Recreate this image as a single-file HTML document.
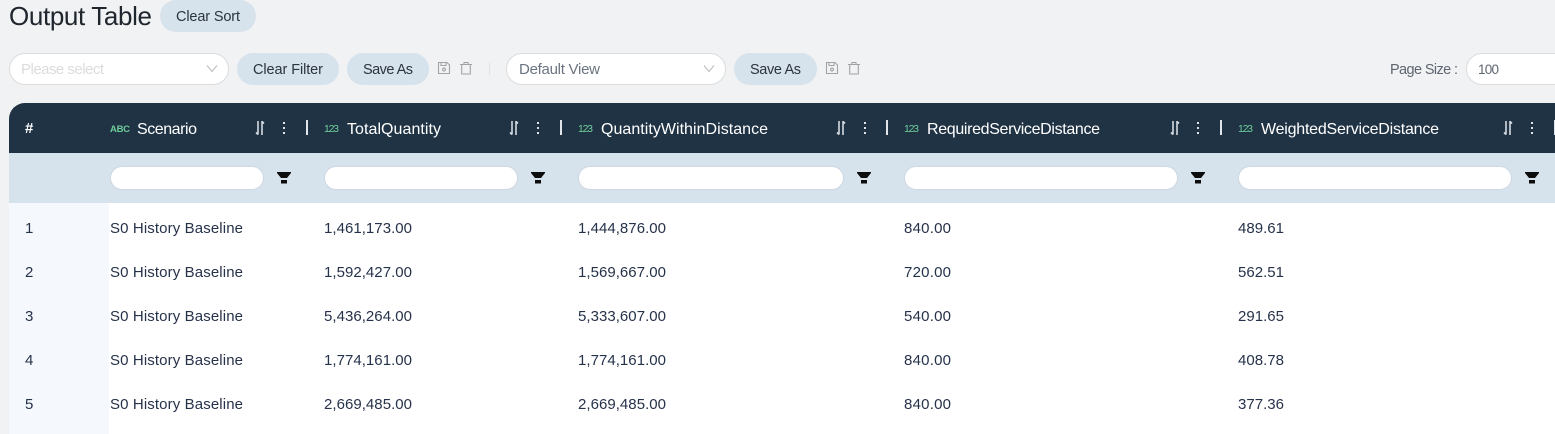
<!DOCTYPE html>
<html>
<head>
<meta charset="utf-8">
<title>Output Table</title>
<style>
html,body{margin:0;padding:0;width:1555px;height:434px;overflow:hidden;background:#f1f2f4}
svg{display:block}
text{font-family:"Liberation Sans",sans-serif;white-space:pre}
.btn{font-size:14.5px;fill:#2b3440}
.hd{font-size:16px;fill:#ffffff}
.ty{font-size:10.5px;fill:#6fce9a}
.c{font-size:15px;fill:#26324a}
.ic{fill:none;stroke:#a3a3a3;stroke-width:1.1}
.sep{fill:#e1e5ea}
.dot{fill:#dfe3e8}
.fi{fill:#fff;stroke:#cfd8e2;stroke-width:1}
</style>
</head>
<body>
<svg width="1555" height="434" viewBox="0 0 1555 434" xmlns="http://www.w3.org/2000/svg">
<defs>
<g id="sort">
<path d="M3 121v13.5M1 132.5l2 2M7 121v14M7 121.5l2 2" fill="none" stroke="#d5dae0" stroke-width="1.6"/>
</g>
<g id="menu">
<rect x="0" y="122" width="2" height="2" class="dot"/>
<rect x="0" y="127" width="2" height="2" class="dot"/>
<rect x="0" y="132" width="2" height="2" class="dot"/>
</g>
<g id="fun">
<path d="M0 172h14v1l-4 5h-6l-4-5z" fill="#0d0d0d"/>
<rect x="4" y="180" width="6" height="3.5" fill="#0d0d0d"/>
</g>
<g id="save">
<path class="ic" d="M.5 .5h8.5l2.5 2.5v8.5h-11z"/>
<path class="ic" d="M3 .5v3h5v-3"/>
<circle class="ic" cx="6" cy="7.5" r="1.4"/>
</g>
<g id="trash">
<path class="ic" d="M0 2.5h12M4 2.5v-2h4v2M1.7 2.5v9.5h8.6v-9.5"/>
</g>
</defs>

<rect width="1555" height="434" fill="#f1f2f4"/>

<text x="9" y="25" fill="#20262e" textLength="143" lengthAdjust="spacing" style="font-size:26px">Output Table</text>
<rect x="160" y="0" width="96" height="32" rx="16" fill="#d6e2ec"/>
<text class="btn" x="176" y="21" textLength="64">Clear Sort</text>

<rect x="9.5" y="53.5" width="219" height="31" rx="15.5" fill="#fff" stroke="#dcdcdc"/>
<text x="21" y="74" style="font-size:15px;fill:#dcdcdc" textLength="83">Please select</text>
<path d="M207 65.5l5 6 5-6" fill="none" stroke="#bdbdbd" stroke-width="1.1"/>
<rect x="237" y="53" width="102" height="32" rx="16" fill="#d6e2ec"/>
<text class="btn" x="253" y="74" textLength="70">Clear Filter</text>
<rect x="347" y="53" width="82" height="32" rx="16" fill="#d6e2ec"/>
<text class="btn" x="363" y="74" textLength="50">Save As</text>
<use href="#save" x="438" y="62"/>
<use href="#trash" x="460" y="62"/>
<rect x="489" y="63" width="1" height="12" fill="#e0e1e3"/>

<rect x="506.5" y="53.5" width="219" height="31" rx="15.5" fill="#fff" stroke="#dcdcdc"/>
<text x="519" y="74" style="font-size:15px;fill:#6b7480" textLength="81">Default View</text>
<path d="M704 65.5l5 6 5-6" fill="none" stroke="#bdbdbd" stroke-width="1.1"/>
<rect x="734" y="53" width="83" height="32" rx="16" fill="#d6e2ec"/>
<text class="btn" x="750" y="74" textLength="51">Save As</text>
<use href="#save" x="826" y="62"/>
<use href="#trash" x="848" y="62"/>

<text x="1390" y="74" style="font-size:14.5px;fill:#5f6670" textLength="68">Page Size :</text>
<rect x="1466.5" y="53.5" width="110" height="31" rx="15.5" fill="#fff" stroke="#dcdcdc"/>
<text x="1478" y="74" style="font-size:13.5px;fill:#5f6670" textLength="21">100</text>

<path d="M9 153V119a16 16 0 0 1 16-16H1555V153z" fill="#203345"/>
<rect x="9" y="153" width="1546" height="50" fill="#d6e2ec"/>
<rect x="9" y="203" width="1546" height="231" fill="#fff"/>
<rect x="9" y="203" width="100" height="231" fill="#f5f9fd"/>

<text x="25" y="133" style="font-size:15px;font-weight:bold;fill:#fff" textLength="10">#</text>

<text class="ty" x="110" y="132" textLength="20" style="font-size:9.5px;font-weight:bold">ABC</text>
<text class="hd" x="137" y="134" textLength="60">Scenario</text>
<use href="#sort" x="255"/><use href="#menu" x="283"/><rect class="sep" x="306" y="120" width="2" height="15"/>

<text class="ty" x="324" y="132" textLength="15">123</text>
<text class="hd" x="347" y="134" textLength="94">TotalQuantity</text>
<use href="#sort" x="509"/><use href="#menu" x="537"/><rect class="sep" x="560" y="120" width="2" height="15"/>

<text class="ty" x="578" y="132" textLength="15">123</text>
<text class="hd" x="601" y="134" textLength="167">QuantityWithinDistance</text>
<use href="#sort" x="836"/><use href="#menu" x="864"/><rect class="sep" x="886" y="120" width="2" height="15"/>

<text class="ty" x="904" y="132" textLength="15">123</text>
<text class="hd" x="927" y="134" textLength="173">RequiredServiceDistance</text>
<use href="#sort" x="1170"/><use href="#menu" x="1197"/><rect class="sep" x="1220" y="120" width="2" height="15"/>

<text class="ty" x="1238" y="132" textLength="15">123</text>
<text class="hd" x="1261" y="134" textLength="178">WeightedServiceDistance</text>
<use href="#sort" x="1503"/><use href="#menu" x="1531"/><rect class="sep" x="1554" y="120" width="1" height="15"/>

<rect class="fi" x="110.5" y="166.5" width="153" height="23" rx="11.5"/>
<use href="#fun" x="277"/>
<rect class="fi" x="324.5" y="166.5" width="193" height="23" rx="11.5"/>
<use href="#fun" x="531"/>
<rect class="fi" x="578.5" y="166.5" width="265" height="23" rx="11.5"/>
<use href="#fun" x="857"/>
<rect class="fi" x="904.5" y="166.5" width="273" height="23" rx="11.5"/>
<use href="#fun" x="1191"/>
<rect class="fi" x="1238.5" y="166.5" width="273" height="23" rx="11.5"/>
<use href="#fun" x="1525"/>

<g transform="translate(0,1)">
<text class="c" x="25" y="232">1</text>
<text class="c" x="110" y="232" textLength="133">S0 History Baseline</text>
<text class="c" x="324" y="232" textLength="88">1,461,173.00</text>
<text class="c" x="578" y="232" textLength="88">1,444,876.00</text>
<text class="c" x="904" y="232" textLength="47">840.00</text>
<text class="c" x="1238" y="232" textLength="46">489.61</text>

<text class="c" x="25" y="276">2</text>
<text class="c" x="110" y="276" textLength="133">S0 History Baseline</text>
<text class="c" x="324" y="276" textLength="88">1,592,427.00</text>
<text class="c" x="578" y="276" textLength="88">1,569,667.00</text>
<text class="c" x="904" y="276" textLength="47">720.00</text>
<text class="c" x="1238" y="276" textLength="46">562.51</text>

<text class="c" x="25" y="320">3</text>
<text class="c" x="110" y="320" textLength="133">S0 History Baseline</text>
<text class="c" x="324" y="320" textLength="88">5,436,264.00</text>
<text class="c" x="578" y="320" textLength="88">5,333,607.00</text>
<text class="c" x="904" y="320" textLength="47">540.00</text>
<text class="c" x="1238" y="320" textLength="46">291.65</text>

<text class="c" x="25" y="364">4</text>
<text class="c" x="110" y="364" textLength="133">S0 History Baseline</text>
<text class="c" x="324" y="364" textLength="88">1,774,161.00</text>
<text class="c" x="578" y="364" textLength="88">1,774,161.00</text>
<text class="c" x="904" y="364" textLength="47">840.00</text>
<text class="c" x="1238" y="364" textLength="46">408.78</text>

<text class="c" x="25" y="408">5</text>
<text class="c" x="110" y="408" textLength="133">S0 History Baseline</text>
<text class="c" x="324" y="408" textLength="88">2,669,485.00</text>
<text class="c" x="578" y="408" textLength="88">2,669,485.00</text>
<text class="c" x="904" y="408" textLength="47">840.00</text>
<text class="c" x="1238" y="408" textLength="46">377.36</text>
</g>
</svg>
</body>
</html>
